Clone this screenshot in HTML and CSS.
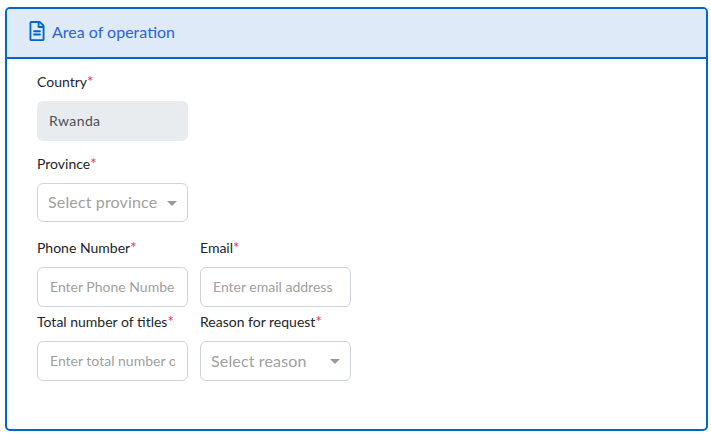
FILE: index.html
```html
<!DOCTYPE html>
<html lang="en">

<head>
    <meta charset="UTF-8">
    <meta name="viewport" content="width=device-width, initial-scale=1.0">
    <link rel="stylesheet" href="styles.css">
    <title>Area of operation</title>
</head>

<body>

    <div class="card">

        <div class="card-header">
            <svg class="card-icon" viewBox="0 0 384 512"><path fill="currentColor" d="M288 248v28c0 6.6-5.4 12-12 12H108c-6.6 0-12-5.4-12-12v-28c0-6.6 5.4-12 12-12h168c6.6 0 12 5.4 12 12zm-12 72H108c-6.6 0-12 5.4-12 12v28c0 6.6 5.4 12 12 12h168c6.6 0 12-5.4 12-12v-28c0-6.6-5.4-12-12-12zm108-188.1V464c0 26.5-21.5 48-48 48H48c-26.5 0-48-21.5-48-48V48C0 21.5 21.5 0 48 0h204.1C264.8 0 277 5.1 286 14.1L369.9 98c9 8.9 14.1 21.2 14.1 33.9zm-128-80V128h76.1L256 51.9zM336 464V176H232c-13.3 0-24-10.7-24-24V48H48v416h288z"/></svg>
            <span>Area of operation</span>
        </div>

        <form class="card-body">
            <div class="row">
                <div class="field">
                    <label>Country<span class="req">*</span></label>
                    <input class="control" type="text" value="Rwanda" disabled>
                </div>
            </div>

            <div class="row row-province">
                <div class="field">
                    <label>Province<span class="req">*</span></label>
                    <div class="select select-short">Select province</div>
                </div>
            </div>

            <div class="row row-phone">
                <div class="field">
                    <label>Phone Number<span class="req">*</span></label>
                    <input class="control" type="text" placeholder="Enter Phone Number">
                </div>
                <div class="field">
                    <label>Email<span class="req">*</span></label>
                    <input class="control" type="text" placeholder="Enter email address">
                </div>
            </div>

            <div class="row row-titles">
                <div class="field">
                    <label>Total number of titles<span class="req">*</span></label>
                    <input class="control" type="text" placeholder="Enter total number of titles">
                </div>
                <div class="field">
                    <label>Reason for request<span class="req">*</span></label>
                    <div class="select">Select reason</div>
                </div>
            </div>
        </form>

    </div>

</body>
</html>
```

FILE: styles.css
```css
* {
    box-sizing: border-box;
}

body {
    margin: 0;
    padding: 7px 3px 0 5px;
    background: #fff;
    font-family: Lato, "Noto Sans", sans-serif;
    font-size: 14px;
    color: #212529;
}

.card {
    height: 424px;
    border: 2px solid #0066cc;
    border-radius: 5px;
    box-shadow: 0 4px 8px rgba(0, 0, 0, 0.05);
}

.card-header {
    display: flex;
    align-items: center;
    gap: 7px;
    height: 50px;
    padding-left: 22px;
    padding-bottom: 4px;
    background: #deeaf7;
    border-bottom: 2px solid #0066cc;
    border-radius: 3px 3px 0 0;
    color: #2a66cf;
    font-size: 16px;
}

.card-icon {
    width: 16px;
    height: 20px;
    color: #0066cc;
}

.card-body {
    padding: 13px 0 0 30px;
}

.row {
    display: flex;
    gap: 12px;
}

.row-province {
    margin-top: 13px;
}

.row-phone {
    margin-top: 16px;
}

.row-titles {
    margin-top: 5px;
}

.field {
    width: 151px;
}

.field label {
    display: block;
    height: 20px;
    margin-bottom: 9px;
    line-height: 20px;
    white-space: nowrap;
}

.req {
    color: #f0294f;
    font-size: 15px;
    line-height: 0;
}

.control {
    display: block;
    width: 100%;
    height: 40px;
    padding: 0 12px 2px;
    border: 1px solid #cfd3da;
    border-radius: 6px;
    background: #fff;
    font: inherit;
    font-size: 14px;
    color: #495057;
}

.control::placeholder {
    color: #a0a0a0;
    opacity: 1;
}

.control:disabled {
    padding-left: 11px;
    border-color: #e9ecef;
    background: #e9ecef;
    letter-spacing: 0.4px;
}

.select {
    position: relative;
    height: 40px;
    padding-left: 10px;
    border: 1px solid #cfd3da;
    border-radius: 6px;
    line-height: 37px;
    font-size: 16px;
    letter-spacing: 0.15px;
    color: #a0a0a0;
}

.select-short {
    height: 39px;
    line-height: 36px;
}

.select::after {
    content: "";
    position: absolute;
    right: 10px;
    top: 17px;
    border-top: 5px solid #999;
    border-left: 5px solid transparent;
    border-right: 5px solid transparent;
}
```
